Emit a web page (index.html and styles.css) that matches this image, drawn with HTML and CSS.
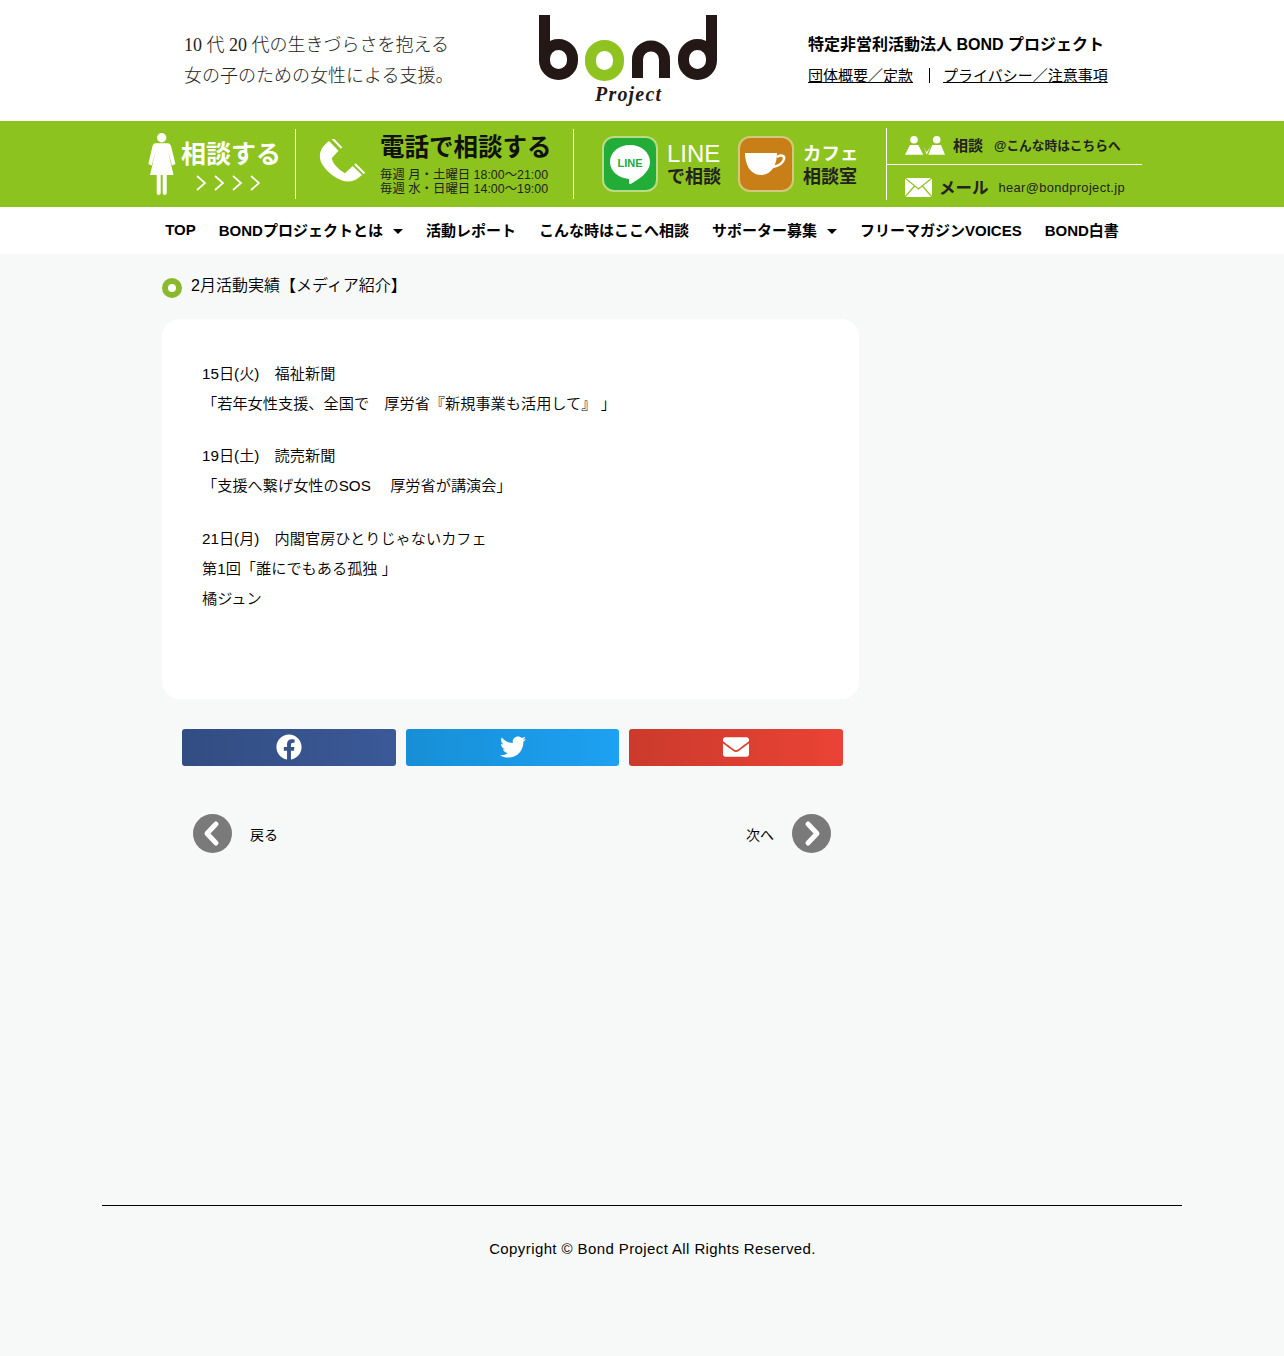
FILE: index.html
```html
<!DOCTYPE html>
<html lang="ja">
<head>
  <meta charset="UTF-8" />
  <meta name="viewport" content="width=device-width, initial-scale=1.0"/>
  <title>2月活動実績【メディア紹介】</title>
  <link rel="stylesheet" href="styles.css">
</head>
<body>
  <header class="site-header">
    <div class="tagline">
      <p>10 代 20 代の生きづらさを抱える</p>
      <p>女の子のための女性による支援。</p>
    </div>
    <div class="logo">
      <svg width="178" height="72" viewBox="0 0 178 72" fill="none" stroke-width="11">
        <g stroke="#231815">
          <path d="M5.5 0V45"/>
          <rect x="5.5" y="29.5" width="28" height="30" rx="14"/>
          <path d="M98.5 63V44.5a13.5 13.5 0 0 1 27 0V63"/>
          <path d="M172.5 0V45"/>
          <rect x="144.5" y="29.5" width="28" height="30" rx="14"/>
        </g>
        <rect x="51.5" y="30.5" width="28" height="30" rx="14" stroke="#8fc31f"/>
      </svg>
      <span class="logo-sub">Project</span>
    </div>
    <div class="org">
      <p class="org-name">特定非営利活動法人 BOND プロジェクト</p>
      <p class="org-links"><a href="#">団体概要／定款</a><a href="#">プライバシー／注意事項</a></p>
    </div>
  </header>

  <div class="band">
    <div class="band-inner">
      <a class="sec sec-soudan" href="#">
        <svg class="person" width="28" height="62" viewBox="0 0 28 62" fill="#fff">
          <circle cx="13.7" cy="4.7" r="4.7"/>
          <path d="M7 10.3H20.3Q22 10.3 23 13L27.5 31 24 32.5 20.3 19 25.5 42H18.7V60a2 2 0 0 1-4 0V42H12.7V60a2 2 0 0 1-4 0V42H2L7.5 19 3.7 32.5 .3 31 4.5 13Q5.5 10.3 7 10.3Z"/>
        </svg>
        <span class="soudan-col">
          <span class="soudan-text">相談する</span>
          <svg class="soudan-arrows" width="64" height="16" viewBox="0 0 64 16" fill="none" stroke="#fff" stroke-width="1.7">
            <path d="M1 1l8 7-8 7M19 1l8 7-8 7M37 1l8 7-8 7M55 1l8 7-8 7"/>
          </svg>
        </span>
      </a>

      <a class="sec sec-tel" href="#">
        <svg width="46" height="50" viewBox="0 1 46 50" fill="#fff">
          <path d="M10 3L19.5 12.7 12.7 20.3Q13.5 24 16 27 20 32 26 35.3L33.7 28 43 37C37 43 30 45 23 42.5 14 39 6 32 2 24-1 16 2 9 10 3Z"/>
          <path d="M13.5 .5L22.5 10M36 26L45.5 35.5" stroke="#fff" stroke-width="2" fill="none"/>
        </svg>
        <span class="tel-col">
          <span class="tel-title">電話で相談する</span>
          <span class="tel-hours">毎週 月・土曜日 18:00〜21:00</span>
          <span class="tel-hours">毎週 水・日曜日 14:00〜19:00</span>
        </span>
      </a>

      <div class="sec sec-apps">
        <a class="app" href="#">
          <span class="app-icon app-line">
            <svg width="44" height="44" viewBox="0 0 44 44">
              <path d="M22 3c11 0 20 7 20 17 0 8-7 14-13 18-3 2-6 4-7 4-1 0-1-1-1-2v-3C10 36 2 29 2 20 2 10 11 3 22 3z" fill="#fff"/>
              <text x="22" y="25" text-anchor="middle" class="line-word">LINE</text>
            </svg>
          </span>
          <span class="app-text"><span class="app-top">LINE</span><span class="app-bot">で相談</span></span>
        </a>
        <a class="app" href="#">
          <span class="app-icon app-cafe">
            <svg width="44" height="26" viewBox="0 0 44 26" fill="#fff">
              <path d="M1 2h32c0 11-5 22-16 22S1 13 1 2z"/>
              <path d="M33 6c4-3 8-1 7 2-1 4-6 7-11 8" fill="none" stroke="#fff" stroke-width="2.5"/>
            </svg>
          </span>
          <span class="app-text"><span class="app-top app-top-cafe">カフェ</span><span class="app-bot">相談室</span></span>
        </a>
      </div>

      <div class="sec sec-contact">
        <a class="contact-row contact-talk" href="#">
          <svg width="40" height="20" viewBox="0 0 40 20" fill="#fff">
            <circle cx="9" cy="4.7" r="3.8"/>
            <path d="M5 10h8.3L18.3 19.7H0z"/>
            <circle cx="31.7" cy="4.7" r="3.8"/>
            <path d="M27.3 10H36L40 19.7H23.3zM18.3 10.5L21.7 19.7 26 10.5 23 15.5 21.7 17 20.5 15.5z"/>
          </svg>
          <b class="c-label">相談</b>
          <span class="c-note">@こんな時はこちらへ</span>
        </a>
        <a class="contact-row contact-mail" href="#">
          <svg width="27" height="19" viewBox="0 0 27 19" fill="none">
            <rect width="27" height="19" fill="#fff"/>
            <path d="M0 0l13.5 11L27 0M0 19l9.5-11M27 19L17.5 8" stroke="#8cc31e" stroke-width="1.2"/>
          </svg>
          <b class="c-label c-label-mail">メール</b>
          <span class="c-mail">hear@bondproject.jp</span>
        </a>
      </div>
    </div>
  </div>

  <nav class="gnav">
    <a href="#">TOP</a>
    <a href="#" class="has-sub">BONDプロジェクトとは</a>
    <a href="#">活動レポート</a>
    <a href="#">こんな時はここへ相談</a>
    <a href="#" class="has-sub">サポーター募集</a>
    <a href="#">フリーマガジンVOICES</a>
    <a href="#">BOND白書</a>
  </nav>

  <main class="content">
    <h1 class="post-title">2月活動実績【メディア紹介】</h1>

    <article class="post-card">
      <p>15日(火)　福祉新聞<br>「若年女性支援、全国で　厚労省『新規事業も活用して』 」</p>
      <p>19日(土)　読売新聞<br>「支援へ繋げ女性のSOS　 厚労省が講演会」</p>
      <p>21日(月)　内閣官房ひとりじゃないカフェ<br>第1回「誰にでもある孤独 」<br>橘ジュン</p>
    </article>

    <div class="share">
      <a class="share-btn share-fb" href="#">
        <svg width="26" height="26" viewBox="0 0 512 512" fill="#fff"><path d="M504 256C504 119 393 8 256 8S8 119 8 256c0 123.78 90.69 226.38 209.25 245V327.69h-63V256h63v-54.64c0-62.15 37-96.48 93.67-96.48 27.14 0 55.52 4.84 55.52 4.84v61h-31.28c-30.8 0-40.41 19.12-40.41 38.73V256h68.78l-11 71.69h-57.78V501C413.31 482.38 504 379.78 504 256z"/></svg>
      </a>
      <a class="share-btn share-tw" href="#">
        <svg width="26" height="26" viewBox="0 0 512 512" fill="#fff"><path d="M459.37 151.716c.325 4.548.325 9.097.325 13.645 0 138.72-105.583 298.558-298.558 298.558-59.452 0-114.68-17.219-161.137-47.106 8.447.974 16.568 1.299 25.34 1.299 49.055 0 94.213-16.568 130.274-44.832-46.132-.975-84.792-31.188-98.112-72.772 6.498.974 12.995 1.624 19.818 1.624 9.421 0 18.843-1.3 27.614-3.573-48.081-9.747-84.143-51.98-84.143-102.985v-1.299c13.969 7.797 30.214 12.67 47.431 13.319-28.264-18.843-46.781-51.005-46.781-87.391 0-19.492 5.197-37.36 14.294-52.954 51.655 63.675 129.3 105.258 216.365 109.807-1.624-7.797-2.599-15.918-2.599-24.04 0-57.828 46.782-104.934 104.934-104.934 30.213 0 57.502 12.67 76.67 33.137 23.715-4.548 46.456-13.32 66.599-25.34-7.798 24.366-24.366 44.833-46.132 57.827 21.117-2.273 41.584-8.122 60.426-16.243-14.292 20.791-32.161 39.308-52.628 54.253z"/></svg>
      </a>
      <a class="share-btn share-mail" href="#">
        <svg width="26" height="26" viewBox="0 0 512 512" fill="#fff"><path d="M502.3 190.8c3.9-3.1 9.7-.2 9.7 4.7V400c0 26.5-21.5 48-48 48H48c-26.5 0-48-21.5-48-48V195.6c0-5 5.7-7.8 9.7-4.7 22.4 17.4 52.1 39.5 154.1 113.6 21.1 15.4 56.7 47.8 92.2 47.6 35.7.3 72-32.8 92.3-47.6 102-74.1 131.6-96.3 154-113.7zM256 320c23.2.4 56.6-29.2 73.4-41.4 132.7-96.3 142.8-104.7 173.4-128.7 5.8-4.5 9.2-11.5 9.2-18.9v-19c0-26.5-21.5-48-48-48H48C21.5 64 0 85.5 0 112v19c0 7.4 3.4 14.3 9.2 18.9 30.6 23.9 40.7 32.4 173.4 128.7 16.8 12.2 50.2 41.8 73.4 41.4z"/></svg>
      </a>
    </div>

    <div class="pager">
      <a class="pager-link" href="#">
        <svg width="39" height="39" viewBox="0 0 39 39"><circle cx="19.5" cy="19.5" r="19.5" fill="#7a7a7a"/><path d="M23 10l-9 9.5 9 9.5" fill="none" stroke="#fff" stroke-width="5" stroke-linecap="round" stroke-linejoin="round"/></svg>
        <span>戻る</span>
      </a>
      <a class="pager-link" href="#">
        <span>次へ</span>
        <svg width="39" height="39" viewBox="0 0 39 39"><circle cx="19.5" cy="19.5" r="19.5" fill="#7a7a7a"/><path d="M16 10l9 9.5-9 9.5" fill="none" stroke="#fff" stroke-width="5" stroke-linecap="round" stroke-linejoin="round"/></svg>
      </a>
    </div>
  </main>

  <footer class="site-footer">
    <p>Copyright © Bond Project All Rights Reserved.</p>
  </footer>
</body>
</html>
```

FILE: styles.css
```css
*, *::before, *::after {
  box-sizing: border-box;
}
html, body {
  margin: 0;
  padding: 0;
}
body {
  height: 1356px;
  overflow: hidden;
  background: #f7f9f8;
  color: #000;
  font-family: "Liberation Sans", "Noto Sans CJK JP", sans-serif;
}
a {
  color: inherit;
  text-decoration: none;
}
p {
  margin: 0;
}

/* header */
.site-header {
  display: flex;
  height: 121px;
  padding-left: 184px;
  background: #fff;
}
.tagline {
  width: 355px;
  padding-top: 30px;
  color: #222;
  font-family: "Liberation Serif", "Noto Sans CJK JP", serif;
  font-size: 18px;
  font-weight: 300;
  line-height: 31px;
}
.logo {
  display: flex;
  flex-direction: column;
  width: 269px;
  padding-top: 15px;
}
.logo svg {
  display: block;
}
.logo-sub {
  margin: -3px 0 0 56px;
  color: #231815;
  font-family: "Liberation Serif", serif;
  font-size: 20px;
  font-style: italic;
  font-weight: bold;
  line-height: 20px;
  letter-spacing: 1.2px;
}
.org {
  padding-top: 33px;
}
.org-name {
  font-size: 16px;
  font-weight: bold;
  line-height: 24px;
}
.org-links {
  display: flex;
  margin-top: 8px;
  font-size: 15px;
  line-height: 22px;
}
.org-links a {
  text-decoration: underline;
}
.org-links a:first-child {
  margin-right: 16px;
}
.org-links a + a {
  padding-left: 14px;
  background: linear-gradient(#000, #000) 0 3px / 1px 15px no-repeat;
}

/* green band */
.band {
  height: 86px;
  background: #8cc31e;
}
.band-inner {
  display: flex;
  align-items: center;
  height: 100%;
  padding-left: 142px;
}
.sec {
  display: flex;
  align-items: center;
  height: 70px;
}
.sec-soudan {
  width: 154px;
  padding-left: 6px;
  border-right: 1px solid #fff;
}
.soudan-col {
  display: flex;
  flex-direction: column;
  align-items: center;
  margin-left: 5px;
}
.soudan-text {
  color: #fff;
  font-size: 25px;
  font-weight: bold;
  line-height: 34px;
}
.soudan-arrows {
  margin: 4px 6px 0 0;
}
.sec-tel {
  width: 278px;
  padding-left: 23px;
  border-right: 1px solid #fff;
}
.tel-col {
  display: flex;
  flex-direction: column;
  margin-left: 15px;
}
.tel-title {
  margin-bottom: 4px;
  color: #111;
  font-size: 24.5px;
  font-weight: bold;
  line-height: 32px;
  white-space: nowrap;
}
.tel-hours {
  color: #222;
  font-size: 12.4px;
  line-height: 14px;
  white-space: nowrap;
}
.sec-apps {
  gap: 17px;
  width: 312px;
  padding-left: 28px;
}
.app {
  display: flex;
  align-items: center;
  gap: 9px;
}
.app-icon {
  display: flex;
  align-items: center;
  justify-content: center;
  width: 56px;
  height: 56px;
  border: 2px solid #b9dc84;
  border-radius: 12px;
}
.app-line {
  background: #22ac38;
}
.app-cafe {
  background: #c97f17;
  border-color: #d3c97a;
}
.line-word {
  fill: #22ac38;
  font-size: 11px;
  font-weight: bold;
}
.app-text {
  display: flex;
  flex-direction: column;
}
.app-top {
  color: #fff;
  font-size: 24px;
  line-height: 25px;
}
.app-top-cafe {
  font-size: 18.5px;
  font-weight: bold;
}
.app-bot {
  color: #222;
  font-size: 18px;
  font-weight: bold;
  line-height: 22px;
}
.sec-contact {
  flex-direction: column;
  align-items: stretch;
  width: 256px;
  height: 72px;
  border-left: 1px solid #fff;
}
.contact-row {
  display: flex;
  align-items: center;
  height: 36px;
  padding-left: 18px;
  color: #222;
}
.contact-talk {
  padding-bottom: 3px;
}
.contact-mail {
  border-top: 1px solid #fff;
  padding-top: 9px;
}
.c-label {
  margin-left: 8px;
  font-size: 15px;
}
.c-label-mail {
  margin-left: 7px;
  font-size: 16.5px;
}
.c-note {
  margin-left: 11px;
  font-size: 12.7px;
  font-weight: bold;
}
.c-mail {
  margin-left: 10px;
  font-size: 12.9px;
  letter-spacing: 0.35px;
}

/* nav */
.gnav {
  display: flex;
  justify-content: center;
  align-items: center;
  gap: 23px;
  height: 47px;
  padding-bottom: 3px;
  background: #fff;
  font-size: 15px;
  font-weight: bold;
}
.has-sub::after {
  content: "";
  display: inline-block;
  margin-left: 10px;
  vertical-align: 2px;
  border-top: 5px solid #000;
  border-left: 5px solid transparent;
  border-right: 5px solid transparent;
}

/* post */
.content {
  width: 697px;
  margin-left: 162px;
}
.post-title {
  position: relative;
  margin: 0;
  padding: 20px 0 0 29px;
  font-size: 16px;
  font-weight: 350;
  line-height: 24px;
}
.post-title::before {
  content: "";
  position: absolute;
  left: 0;
  top: 24px;
  width: 20px;
  height: 20px;
  border: 6px solid #8ab92d;
  border-radius: 50%;
  background: #fff;
}
.post-card {
  height: 380px;
  margin-top: 21px;
  padding: 40px;
  background: #fff;
  border-radius: 18px;
  font-size: 15.2px;
  font-weight: 350;
  line-height: 30px;
}
.post-card p {
  margin-bottom: 22px;
}
.post-card p:nth-child(2) {
  margin-bottom: 23px;
}

.share {
  display: flex;
  gap: 10px;
  margin: 30px 16px 0 20px;
}
.share-btn {
  display: flex;
  flex: 1;
  align-items: center;
  justify-content: center;
  height: 37px;
  padding-bottom: 2px;
  border-radius: 3px;
}
.share-fb {
  background: linear-gradient(90deg, #324d82, #3b5998);
}
.share-tw {
  background: linear-gradient(90deg, #178fd6, #1da1f2);
}
.share-mail {
  background: linear-gradient(90deg, #cb3a2c, #ea4335);
}

.pager {
  display: flex;
  justify-content: space-between;
  margin: 48px 28px 0 31px;
}
.pager-link {
  display: flex;
  align-items: center;
  gap: 18px;
  font-size: 14px;
}
.pager-link span {
  padding-top: 1px;
}

/* footer */
.site-footer {
  width: 1080px;
  margin: 352px auto 0;
  padding: 32px 0 0 21px;
  border-top: 1px solid #000;
  text-align: center;
  font-size: 15px;
  line-height: 22px;
  letter-spacing: 0.4px;
}
```
